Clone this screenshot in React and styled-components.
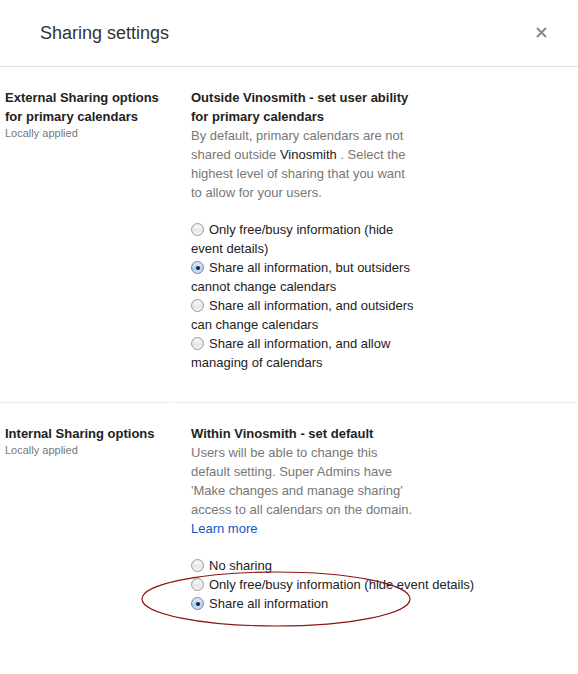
import React from "react";
import styled, { createGlobalStyle } from "styled-components";

const Global = createGlobalStyle`
  html, body { margin: 0; padding: 0; background: #fff; }
  body { font-family: "Liberation Sans", Arial, sans-serif; color: #222; }
`;

const Page = styled.div`
  position: relative;
  width: 578px;
  min-height: 674px;
  background: #fff;
`;

const Header = styled.header`
  display: flex;
  align-items: center;
  justify-content: space-between;
  height: 67px;
  padding: 0 31px 0 40px;
  border-bottom: 1px solid #dedede;
  box-sizing: border-box;
`;

const Title = styled.h1`
  margin: 0;
  font-size: 18px;
  font-weight: normal;
  color: #333;
`;

const Close = styled.button`
  display: flex;
  border: 0;
  padding: 0;
  background: none;
  cursor: pointer;
  margin-top: -2px;
`;

const Section = styled.section`
  display: grid;
  grid-template-columns: 170px 1fr;
  column-gap: 2px;
`;

const Side = styled.div`
  padding: 21px 0 0 5px;
  border-bottom: ${(p) => (p.$divided ? "1px solid #ececec" : "0")};
`;

const SideTitle = styled.div`
  font-size: 13px;
  font-weight: bold;
  line-height: 19px;
  color: #222;
`;

const Note = styled.div`
  font-size: 11px;
  line-height: 14px;
  color: #777;
`;

const Main = styled.div`
  padding: 21px 0 30px 19px;
  border-bottom: ${(p) => (p.$divided ? "1px solid #ececec" : "0")};
`;

const MainTitle = styled.div`
  font-size: 13px;
  font-weight: bold;
  line-height: 19px;
  color: #222;
  max-width: 226px;
`;

const Desc = styled.p`
  margin: 0 0 18px;
  font-size: 13px;
  line-height: 19px;
  color: #777;
  max-width: 226px;
`;

const Strong = styled.span`
  color: #222;
`;

const Link = styled.a`
  color: #15c;
  text-decoration: none;
`;

const Options = styled.div`
  font-size: 13px;
  line-height: 19px;
  color: #222;
  max-width: ${(p) => (p.$nowrap ? "none" : "226px")};
  white-space: ${(p) => (p.$nowrap ? "nowrap" : "normal")};
`;

const Option = styled.label`
  display: block;
`;

const Radio = styled.span`
  display: inline-block;
  position: relative;
  width: 13px;
  height: 13px;
  box-sizing: border-box;
  margin-right: 5px;
  vertical-align: -2px;
  border-radius: 50%;
  border: 1px solid ${(p) => (p.$checked ? "#6b87b3" : "#9a9a9a")};
  background: ${(p) =>
    p.$checked
      ? "linear-gradient(#eaf2fc, #b4cdee 60%, #cfe0f5)"
      : "linear-gradient(#ffffff, #e6e6e6 60%, #f4f4f4)"};
  box-shadow: inset 0 1px 1px rgba(0, 0, 0, 0.08);

  &::after {
    content: "";
    display: ${(p) => (p.$checked ? "block" : "none")};
    position: absolute;
    left: 50%;
    top: 50%;
    width: 4px;
    height: 4px;
    margin: -2px 0 0 -2px;
    border-radius: 50%;
    background: #1d2330;
  }
`;

const Annotation = styled.svg`
  position: absolute;
  left: 140px;
  top: 570px;
  pointer-events: none;
`;

const external = [
  "Only free/busy information (hide event details)",
  "Share all information, but outsiders cannot change calendars",
  "Share all information, and outsiders can change calendars",
  "Share all information, and allow managing of calendars",
];

const internal = [
  "No sharing",
  "Only free/busy information (hide event details)",
  "Share all information",
];

function OptionList({ items, checked, nowrap }) {
  return (
    <Options $nowrap={nowrap}>
      {items.map((t, i) => (
        <Option key={t}>
          <Radio $checked={i === checked} />
          {t}
        </Option>
      ))}
    </Options>
  );
}

export default function App() {
  return (
    <Page>
      <Global />
      <Header>
        <Title>Sharing settings</Title>
        <Close aria-label="Close">
          <svg width="11" height="11" viewBox="0 0 11 11">
            <path d="M1 1 L10 10 M10 1 L1 10" stroke="#8a8a8a" strokeWidth="2" />
          </svg>
        </Close>
      </Header>

      <Section>
        <Side $divided>
          <SideTitle>
            External Sharing options
            <br />
            for primary calendars
          </SideTitle>
          <Note>Locally applied</Note>
        </Side>
        <Main $divided>
          <MainTitle>Outside Vinosmith - set user ability for primary calendars</MainTitle>
          <Desc>
            By default, primary calendars are not shared outside <Strong>Vinosmith</Strong> . Select the
            highest level of sharing that you want to allow for your users.
          </Desc>
          <OptionList items={external} checked={1} />
        </Main>
      </Section>

      <Section>
        <Side>
          <SideTitle>Internal Sharing options</SideTitle>
          <Note>Locally applied</Note>
        </Side>
        <Main>
          <MainTitle>Within Vinosmith - set default</MainTitle>
          <Desc>
            Users will be able to change this default setting. Super Admins have 'Make changes and
            manage sharing' access to all calendars on the domain.
            <br />
            <Link href="#">Learn more</Link>
          </Desc>
          <OptionList items={internal} checked={2} nowrap />
        </Main>
      </Section>

      <Annotation width="276" height="60" viewBox="0 0 276 60">
        <ellipse cx="136" cy="29" rx="134" ry="27" fill="none" stroke="#8c1414" strokeWidth="1.2" />
      </Annotation>
    </Page>
  );
}
